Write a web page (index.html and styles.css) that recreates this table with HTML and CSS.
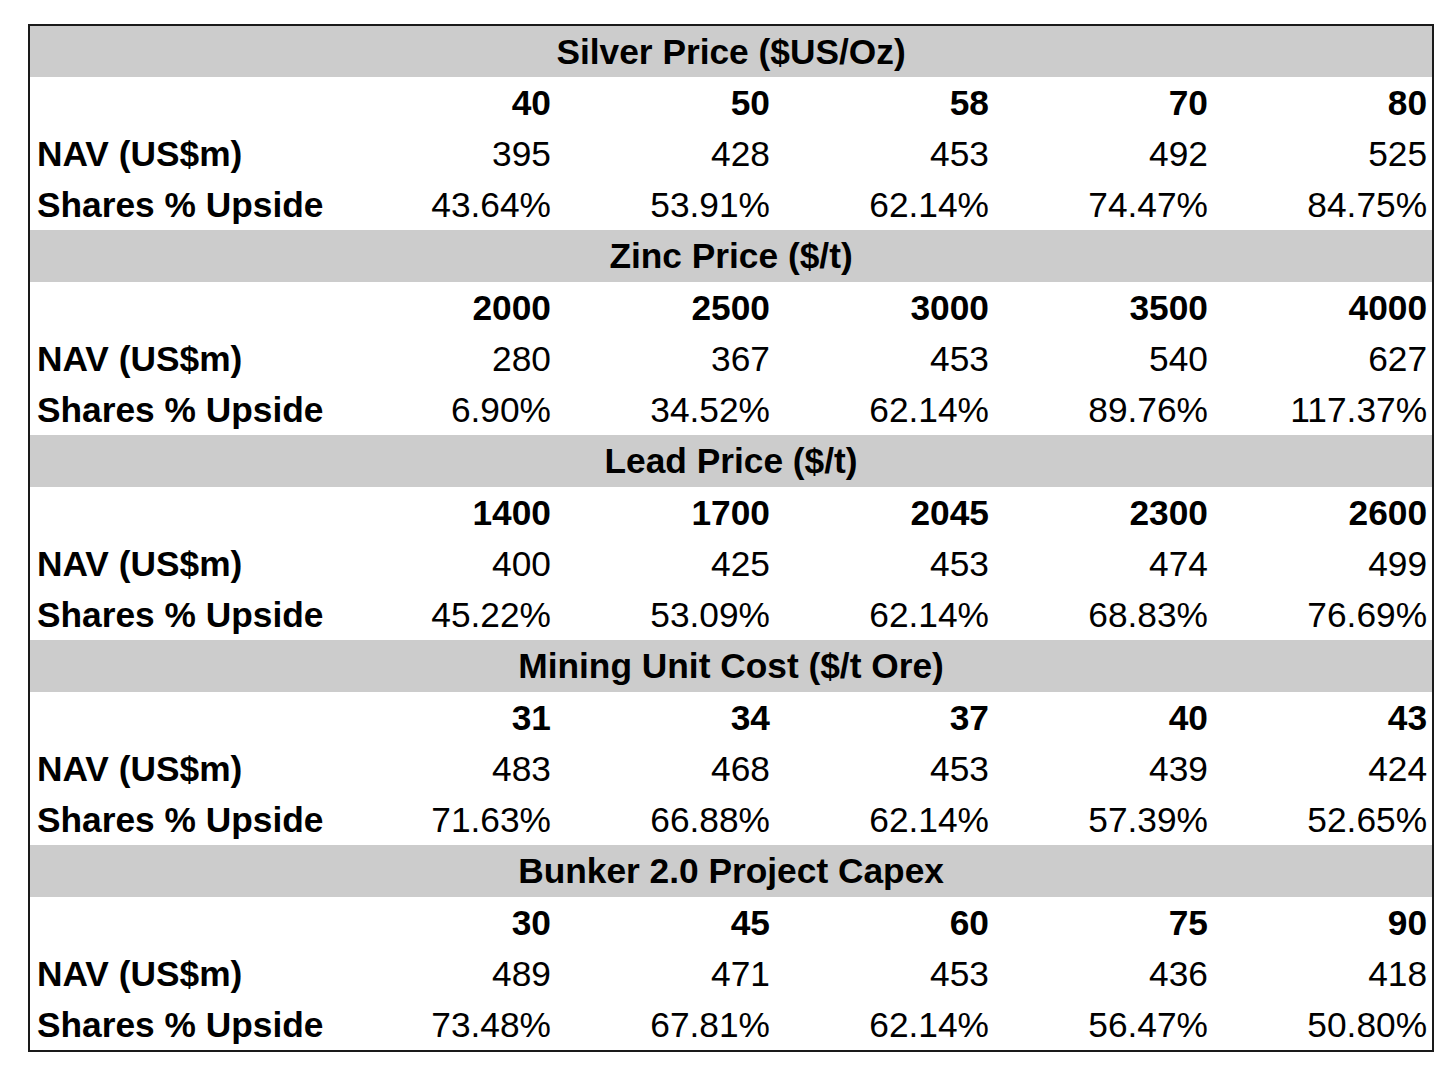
FILE: index.html
```html
<!DOCTYPE html>
<html>
<head>
<meta charset="utf-8">
<link rel="stylesheet" href="styles.css">
</head>
<body>
<table class="sens">
  <colgroup>
    <col class="c-label"><col class="c-val"><col class="c-val"><col class="c-val"><col class="c-val"><col class="c-val">
  </colgroup>
  <tbody>
    <tr class="head first"><td colspan="6">Silver Price ($US/Oz)</td></tr>
    <tr class="scen"><td></td><td>40</td><td>50</td><td>58</td><td>70</td><td>80</td></tr>
    <tr><th>NAV (US$m)</th><td>395</td><td>428</td><td>453</td><td>492</td><td>525</td></tr>
    <tr><th>Shares % Upside</th><td>43.64%</td><td>53.91%</td><td>62.14%</td><td>74.47%</td><td>84.75%</td></tr>

    <tr class="head"><td colspan="6">Zinc Price ($/t)</td></tr>
    <tr class="scen"><td></td><td>2000</td><td>2500</td><td>3000</td><td>3500</td><td>4000</td></tr>
    <tr><th>NAV (US$m)</th><td>280</td><td>367</td><td>453</td><td>540</td><td>627</td></tr>
    <tr><th>Shares % Upside</th><td>6.90%</td><td>34.52%</td><td>62.14%</td><td>89.76%</td><td>117.37%</td></tr>

    <tr class="head"><td colspan="6">Lead Price ($/t)</td></tr>
    <tr class="scen"><td></td><td>1400</td><td>1700</td><td>2045</td><td>2300</td><td>2600</td></tr>
    <tr><th>NAV (US$m)</th><td>400</td><td>425</td><td>453</td><td>474</td><td>499</td></tr>
    <tr><th>Shares % Upside</th><td>45.22%</td><td>53.09%</td><td>62.14%</td><td>68.83%</td><td>76.69%</td></tr>

    <tr class="head"><td colspan="6">Mining Unit Cost ($/t Ore)</td></tr>
    <tr class="scen"><td></td><td>31</td><td>34</td><td>37</td><td>40</td><td>43</td></tr>
    <tr><th>NAV (US$m)</th><td>483</td><td>468</td><td>453</td><td>439</td><td>424</td></tr>
    <tr><th>Shares % Upside</th><td>71.63%</td><td>66.88%</td><td>62.14%</td><td>57.39%</td><td>52.65%</td></tr>

    <tr class="head"><td colspan="6">Bunker 2.0 Project Capex</td></tr>
    <tr class="scen"><td></td><td>30</td><td>45</td><td>60</td><td>75</td><td>90</td></tr>
    <tr><th>NAV (US$m)</th><td>489</td><td>471</td><td>453</td><td>436</td><td>418</td></tr>
    <tr><th>Shares % Upside</th><td>73.48%</td><td>67.81%</td><td>62.14%</td><td>56.47%</td><td>50.80%</td></tr>
  </tbody>
</table>
</body>
</html>
```

FILE: styles.css
```css
html, body {
  margin: 0;
  padding: 0;
  background: #ffffff;
}

body {
  padding: 24px 0 0 28px;
  font-family: "Liberation Sans", Arial, sans-serif;
  color: #000000;
}

.sens {
  border-collapse: separate;
  border-spacing: 0;
  table-layout: fixed;
  width: 1406px;
  border: 2px solid #1a1a1a;
  font-size: 35.3px;
}

.c-label { width: 307px; }
.c-val { width: 219px; }

.sens tr {
  height: 51px;
}

.sens tr.head {
  height: 52px;
}

.sens tr.head.first {
  height: 51px;
}

.sens td,
.sens th {
  padding: 1px 5px 0 7px;
  vertical-align: middle;
  white-space: nowrap;
  line-height: normal;
}

.sens td {
  text-align: right;
  font-weight: 400;
}

.sens th {
  text-align: left;
  font-weight: 700;
}

.sens .head td {
  background: #cccccc;
  text-align: center;
  font-weight: 700;
  padding: 0;
}

.sens .scen td {
  font-weight: 700;
}
```
